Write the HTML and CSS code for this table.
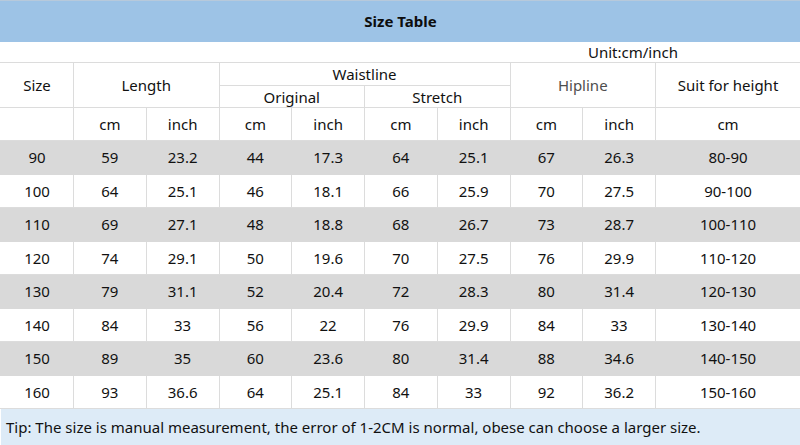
FILE: index.html
```html
<!DOCTYPE html>
<html>
<head>
<meta charset="utf-8">
<link rel="stylesheet" href="styles.css">
</head>
<body>
<table class="size-table">
  <colgroup>
    <col class="c-size">
    <col class="c-n"><col class="c-n"><col class="c-n"><col class="c-n">
    <col class="c-n"><col class="c-n"><col class="c-n"><col class="c-n">
    <col class="c-suit">
  </colgroup>
  <thead>
    <tr class="title-row"><th colspan="10">Size Table</th></tr>
    <tr class="unit-row"><td colspan="10"><span class="unit">Unit:cm/inch</span></td></tr>
    <tr class="head-1">
      <td rowspan="2">Size</td>
      <td rowspan="2" colspan="2">Length</td>
      <td colspan="4">Waistline</td>
      <td rowspan="2" colspan="2" class="muted">Hipline</td>
      <td rowspan="2">Suit for height</td>
    </tr>
    <tr class="head-2">
      <td colspan="2">Original</td>
      <td colspan="2">Stretch</td>
    </tr>
    <tr class="units">
      <td></td>
      <td>cm</td><td>inch</td>
      <td>cm</td><td>inch</td>
      <td>cm</td><td>inch</td>
      <td>cm</td><td>inch</td>
      <td>cm</td>
    </tr>
  </thead>
  <tbody>
    <tr class="alt"><td>90</td><td>59</td><td>23.2</td><td>44</td><td>17.3</td><td>64</td><td>25.1</td><td>67</td><td>26.3</td><td>80-90</td></tr>
    <tr><td>100</td><td>64</td><td>25.1</td><td>46</td><td>18.1</td><td>66</td><td>25.9</td><td>70</td><td>27.5</td><td>90-100</td></tr>
    <tr class="alt"><td>110</td><td>69</td><td>27.1</td><td>48</td><td>18.8</td><td>68</td><td>26.7</td><td>73</td><td>28.7</td><td>100-110</td></tr>
    <tr><td>120</td><td>74</td><td>29.1</td><td>50</td><td>19.6</td><td>70</td><td>27.5</td><td>76</td><td>29.9</td><td>110-120</td></tr>
    <tr class="alt"><td>130</td><td>79</td><td>31.1</td><td>52</td><td>20.4</td><td>72</td><td>28.3</td><td>80</td><td>31.4</td><td>120-130</td></tr>
    <tr><td>140</td><td>84</td><td>33</td><td>56</td><td>22</td><td>76</td><td>29.9</td><td>84</td><td>33</td><td>130-140</td></tr>
    <tr class="alt"><td>150</td><td>89</td><td>35</td><td>60</td><td>23.6</td><td>80</td><td>31.4</td><td>88</td><td>34.6</td><td>140-150</td></tr>
    <tr><td>160</td><td>93</td><td>36.6</td><td>64</td><td>25.1</td><td>84</td><td>33</td><td>92</td><td>36.2</td><td>150-160</td></tr>
  </tbody>
  <tfoot>
    <tr class="tip-row"><td colspan="10">Tip: The size is manual measurement, the error of 1-2CM is normal, obese can choose a larger size.</td></tr>
  </tfoot>
</table>
</body>
</html>
```

FILE: styles.css
```css
html, body {
  margin: 0;
  padding: 0;
  background: #ffffff;
}

body {
  font-family: "Noto Sans", "Open Sans", sans-serif;
  font-size: 15px;
  color: #111111;
}

.size-table {
  width: 800px;
  border-collapse: collapse;
  table-layout: fixed;
}

.c-size { width: 73px; }
.c-n { width: 72.75px; }
.c-suit { width: 145px; }

.size-table td,
.size-table th {
  border: 1px solid #dcdcdc;
  padding: 0;
  text-align: center;
  vertical-align: middle;
  font-weight: normal;
  line-height: 20px;
}

.size-table tr > :first-child { border-left-color: #ffffff; }
.size-table tr > :last-child { border-right-color: #ffffff; }

.size-table .title-row th {
  height: 40px;
  background: #9dc3e6;
  border-color: #9dc3e6;
  border-top: 1px solid #b7c9db;
  font-weight: bold;
  font-size: 15px;
  color: #0d0d0d;
}

.unit-row td {
  height: 20px;
  text-align: left;
}

.unit {
  display: block;
  padding-left: 587px;
  line-height: 20px;
}

.head-1 td { height: 22px; }
.head-2 td { height: 21px; }
.units td { height: 32px; }

.muted { color: #4d4d4d; }

tbody td { height: 32.5px; }

tbody tr.alt td,
tbody tr.alt > :first-child,
tbody tr.alt > :last-child {
  background: #d9d9d9;
  border-color: #d9d9d9;
}

.tip-row td,
.tip-row > :first-child,
.tip-row > :last-child {
  height: 36px;
  text-align: left;
  padding-left: 5px;
  background: #ddebf7;
  border-color: #ddebf7;
  white-space: nowrap;
}
```
